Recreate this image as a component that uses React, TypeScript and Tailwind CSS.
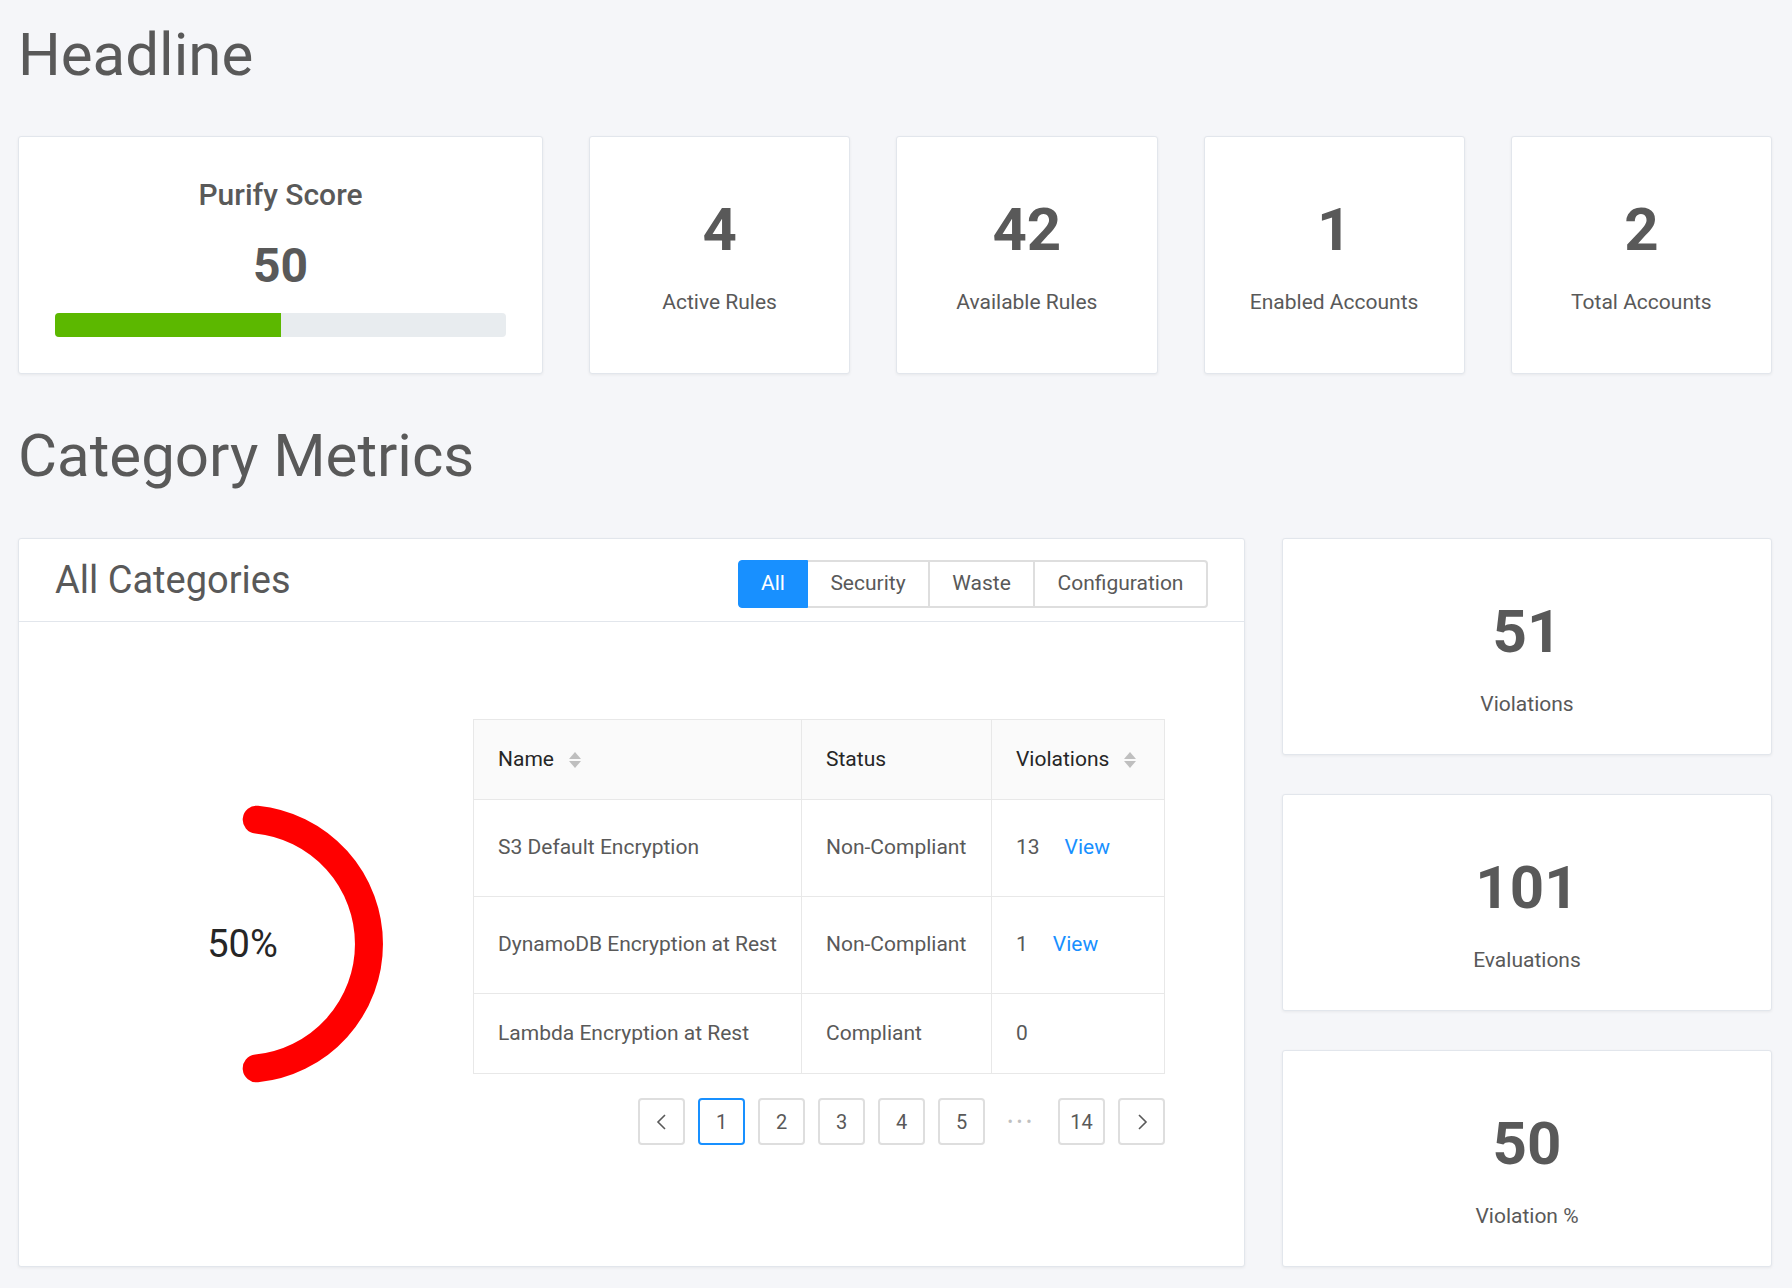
import React from "react";

// ── Small pieces ──────────────────────────────────────────────────────────────
function StatCard({ value, label, className = "" }: { value: string; label: string; className?: string }) {
    return (
        <div className={`bg-white border border-[#e2e6ec] rounded-[3px] shadow-[0_1px_3px_rgba(0,0,0,0.06)] flex flex-col items-center pt-[63px] ${className}`}>
            <div className="text-[60px] leading-none font-bold text-[#595959]">{value}</div>
            <div className="mt-[32px] text-[21px] leading-none text-[#595959]">{label}</div>
        </div>
    );
}

function SortIcon() {
    return (
        <svg width="14" height="22" viewBox="0 0 14 22" className="ml-[14px]">
            <path d="M7 3 L13 10 L1 10 Z" fill="#bfbfbf" />
            <path d="M1 12 L13 12 L7 19 Z" fill="#bfbfbf" />
        </svg>
    );
}

function PageItem({ children, active = false }: { children: React.ReactNode; active?: boolean }) {
    return (
        <div
            className={`w-[47px] h-[47px] rounded-[4px] border-[2px] flex items-center justify-center text-[20px] text-[#595959] bg-white ${
                active ? "border-[#1890ff]" : "border-[#dedede]"
            }`}
        >
            {children}
        </div>
    );
}

function Chevron({ dir }: { dir: "left" | "right" }) {
    return (
        <svg width="14" height="18" viewBox="0 0 14 18">
            <path
                d={dir === "left" ? "M10 2 L3 9 L10 16" : "M4 2 L11 9 L4 16"}
                fill="none"
                stroke="#595959"
                strokeWidth="1.6"
            />
        </svg>
    );
}

const rows = [
    { name: "S3 Default Encryption", status: "Non-Compliant", violations: "13", view: true },
    { name: "DynamoDB Encryption at Rest", status: "Non-Compliant", violations: "1", view: true },
    { name: "Lambda Encryption at Rest", status: "Compliant", violations: "0", view: false },
];

// ── Page ──────────────────────────────────────────────────────────────────────
export default function App() {
    return (
        <div className="min-h-screen bg-[#f5f6f9] pl-[18px] pr-[20px] pt-[25px] pb-[21px] font-[Roboto,sans-serif]">
            <h1 className="text-[60px] leading-none text-[#595959]">Headline</h1>

            {/* Headline cards */}
            <div className="mt-[51px] flex gap-[46px] h-[238px]">
                <div className="w-[525px] bg-white border border-[#e2e6ec] rounded-[3px] shadow-[0_1px_3px_rgba(0,0,0,0.06)] flex flex-col items-center px-[36px] pt-[43px]">
                    <div className="text-[30px] leading-none font-medium text-[#595959]">Purify Score</div>
                    <div className="mt-[32px] text-[48px] leading-none font-bold text-[#595959]">50</div>
                    <div className="mt-[23px] w-full h-[24px] rounded-[4px] bg-[#e8ecef] overflow-hidden">
                        <div className="h-full bg-[#5cb800]" style={{ width: "50%" }} />
                    </div>
                </div>
                <StatCard value="4" label="Active Rules" className="flex-1" />
                <StatCard value="42" label="Available Rules" className="flex-1" />
                <StatCard value="1" label="Enabled Accounts" className="flex-1" />
                <StatCard value="2" label="Total Accounts" className="flex-1" />
            </div>

            <h1 className="mt-[52px] text-[60px] leading-none text-[#595959]">Category Metrics</h1>

            <div className="mt-[52px] flex gap-[37px]">
                {/* Category panel */}
                <div className="flex-1 bg-white border border-[#e2e6ec] rounded-[3px] shadow-[0_1px_3px_rgba(0,0,0,0.06)] flex flex-col">
                    <div className="h-[83px] border-b border-[#e2e6ec] flex justify-between px-[36px]">
                        <div className="self-center text-[38px] leading-none text-[#595959]">All Categories</div>
                        <div className="mt-[21px] flex h-[48px] text-[21px]">
                            <div className="w-[70px] flex items-center justify-center bg-[#1890ff] border border-[#1890ff] text-white rounded-l-[4px]">All</div>
                            <div className="w-[122px] flex items-center justify-center border-y-2 border-r-2 border-[#dedede] text-[#595959]">Security</div>
                            <div className="w-[105px] flex items-center justify-center border-y-2 border-r-2 border-[#dedede] text-[#595959]">Waste</div>
                            <div className="w-[173px] flex items-center justify-center border-y-2 border-r-2 border-[#dedede] text-[#595959] rounded-r-[4px]">Configuration</div>
                        </div>
                    </div>

                    <div className="flex-1 flex">
                        {/* Donut */}
                        <div className="w-[450px] flex items-center justify-center">
                            <div className="relative w-[290px] h-[290px]">
                                <svg width="290" height="290" viewBox="0 0 290 290" className="absolute inset-0">
                                    <path
                                        d="M157.7 20.65 A125 125 0 0 1 157.7 269.35"
                                        fill="none"
                                        stroke="#ff0000"
                                        strokeWidth="28"
                                        strokeLinecap="round"
                                    />
                                </svg>
                                <div className="absolute inset-0 flex items-center justify-center pr-[3px] text-[38px] leading-none text-[#262626]">50%</div>
                            </div>
                        </div>

                        {/* Table */}
                        <div className="ml-[4px] pt-[97px] w-[692px]">
                            <div className="border border-[#e8e8e8] text-[21px]">
                                <div className="grid grid-cols-[328px_190px_1fr] h-[80px] bg-[#fafafa] border-b border-[#e8e8e8] text-[#262626]">
                                    <div className="flex items-center pl-6 border-r border-[#e8e8e8]">Name<SortIcon /></div>
                                    <div className="flex items-center pl-6 border-r border-[#e8e8e8]">Status</div>
                                    <div className="flex items-center pl-6">Violations<SortIcon /></div>
                                </div>
                                {rows.map((r, i) => (
                                    <div
                                        key={r.name}
                                        className={`grid grid-cols-[328px_190px_1fr] text-[#595959] ${
                                            i < 2 ? "h-[97px] border-b border-[#e8e8e8]" : "h-[79px]"
                                        }`}
                                    >
                                        <div className="flex items-center pl-6 border-r border-[#e8e8e8]">{r.name}</div>
                                        <div className="flex items-center pl-6 border-r border-[#e8e8e8]">{r.status}</div>
                                        <div className="flex items-center pl-6">
                                            {r.violations}
                                            {r.view && <span className="ml-[25px] text-[#1890ff]">View</span>}
                                        </div>
                                    </div>
                                ))}
                            </div>

                            <div className="mt-[24px] flex justify-end gap-[13px]">
                                <PageItem><Chevron dir="left" /></PageItem>
                                <PageItem active>1</PageItem>
                                <PageItem>2</PageItem>
                                <PageItem>3</PageItem>
                                <PageItem>4</PageItem>
                                <PageItem>5</PageItem>
                                <div className="w-[47px] h-[47px] flex items-center justify-center text-[#bfbfbf] text-[16px] tracking-[4px]">•••</div>
                                <PageItem>14</PageItem>
                                <PageItem><Chevron dir="right" /></PageItem>
                            </div>
                        </div>
                    </div>
                </div>

                {/* Summary cards */}
                <div className="w-[490px] flex flex-col gap-[39px]">
                    <StatCard value="51" label="Violations" className="h-[217px]" />
                    <StatCard value="101" label="Evaluations" className="h-[217px]" />
                    <StatCard value="50" label="Violation %" className="h-[217px]" />
                </div>
            </div>
        </div>
    );
}
